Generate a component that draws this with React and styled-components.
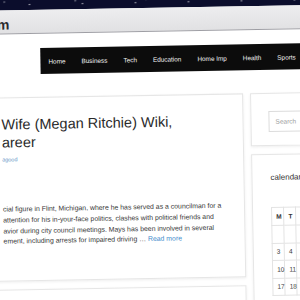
import styled, { createGlobalStyle } from 'styled-components'

const Global = createGlobalStyle`
  html, body {
    margin: 0;
    padding: 0;
    background: #fff;
    overflow: hidden;
  }
  body {
    width: 300px;
    height: 300px;
    font-family: "Liberation Sans", Arial, sans-serif;
  }
`

const Frame = styled.div`
  width: 400px;
  height: 360px;
  margin: -20px 0 0 -50px;
  background: #fff;
  transform: rotate(-1deg);
  transform-origin: 200px 170px;
  display: flex;
  flex-direction: column;
`

const Sky = styled.div`
  height: 28px;
  flex: none;
  background-color: #0b0d2c;
  background-image:
    radial-gradient(circle at 20% 60%, rgba(255,255,255,.7) 0 0.6px, transparent 1px),
    radial-gradient(circle at 55% 80%, rgba(255,255,255,.6) 0 0.6px, transparent 1px),
    radial-gradient(circle at 80% 70%, rgba(255,255,255,.5) 0 0.6px, transparent 1px);
  background-size: 37px 28px, 53px 28px, 71px 28px;
`

const Bar = styled.div`
  height: 24px;
  flex: none;
  background: linear-gradient(#ededef, #e1e1e3);
  border-bottom: 1px solid #9e9ea4;
  display: flex;
  align-items: center;
  padding: 4px 0 0 49px;
  box-sizing: border-box;
`

const SiteName = styled.span`
  font-size: 14px;
  font-weight: bold;
  color: #2b2b2f;
`

const Page = styled.div`
  flex: 1;
  display: flex;
  flex-direction: column;
  padding-top: 14px;
`

const Nav = styled.nav`
  margin-left: 92px;
  height: 26px;
  background: #0c0c0c;
  display: flex;
  align-items: center;
`

const NavItem = styled.span`
  color: #f2f2f2;
  font-size: 6.4px;
  padding: 0 8px;
  white-space: nowrap;
`

const Content = styled.div`
  display: grid;
  grid-template-columns: 294px 1fr;
  column-gap: 7px;
  margin-top: 23px;
`

const MainCol = styled.div`
  display: flex;
  flex-direction: column;
  gap: 8px;
`

const Card = styled.div`
  background: #fff;
  border: 1px solid #e6e6e6;
  box-shadow: 0 1px 3px rgba(0, 0, 0, 0.07);
  box-sizing: border-box;
  height: ${p => p.$h}px;
  padding: ${p => p.$pad};
`

const Title = styled.h2`
  margin: 0;
  font-size: 14.5px;
  line-height: 18px;
  font-weight: normal;
  color: #2a2a2a;
  white-space: nowrap;
`

const Author = styled.a`
  display: block;
  margin-top: 5px;
  font-size: 5.5px;
  color: #5b93c6;
`

const Body = styled.p`
  margin: 42px 0 0;
  font-size: 6.9px;
  line-height: 10.8px;
  color: #363636;
  white-space: nowrap;
`

const More = styled.a`
  color: #3f8ccc;
`

const Side = styled.div`
  display: flex;
  flex-direction: column;
  gap: 8px;
`

const SearchBox = styled.div`
  height: 19px;
  border: 1px solid #dcdcdc;
  background: #fff;
  display: flex;
  align-items: center;
  padding-left: 6px;
  font-size: 6.5px;
  color: #9a9a9a;
`

const WidgetTitle = styled.div`
  font-size: 8px;
  color: #333;
  line-height: 10px;
`

const Table = styled.table`
  margin-top: 24px;
  border-collapse: collapse;
  font-size: 6.5px;
  color: #333;
`

const Th = styled.th`
  width: 14.5px;
  height: 18px;
  border: 1px solid #e3e3e3;
  text-align: left;
  padding: 0 0 0 4px;
  box-sizing: border-box;
`

const Td = styled.td`
  width: 14.5px;
  height: 17.5px;
  border: 1px solid #e3e3e3;
  padding: 0 0 0 4px;
  box-sizing: border-box;
`

const nav = ['Home', 'Business', 'Tech', 'Education', 'Home Imp', 'Health', 'Sports']
const days = ['M', 'T', 'W', 'T', 'F', 'S', 'S']
const weeks = [
  ['', '', '', '', '', '1', '2'],
  ['3', '4', '5', '6', '7', '8', '9'],
  ['10', '11', '12', '13', '14', '15', '16'],
  ['17', '18', '19', '20', '21', '22', '23'],
]

export default function App() {
  return (
    <>
      <Global />
      <Frame>
        <Sky />
        <Bar>
          <SiteName>m</SiteName>
        </Bar>
        <Page>
          <Nav>
            {nav.map(n => <NavItem key={n}>{n}</NavItem>)}
          </Nav>
          <Content>
            <MainCol>
              <Card $h={184} $pad="17px 0 0 51px">
                <Title>Wife (Megan Ritchie) Wiki,<br />areer</Title>
                <Author>agood</Author>
                <Body>
                  cial figure in Flint, Michigan, where he has served as a councilman for a<br />
                  attention for his in-your-face politics, clashes with political friends and<br />
                  avior during city council meetings. Mays has been involved in several<br />
                  ement, including arrests for impaired driving … <More>Read more</More>
                </Body>
              </Card>
              <Card $h={80} $pad="0" />
            </MainCol>
            <Side>
              <Card $h={53} $pad="17px 0 0 17px">
                <SearchBox>Search</SearchBox>
              </Card>
              <Card $h={200} $pad="18px 0 0 18px">
                <WidgetTitle>calendar</WidgetTitle>
                <Table>
                  <thead>
                    <tr>{days.map((d, i) => <Th key={i}>{d}</Th>)}</tr>
                  </thead>
                  <tbody>
                    {weeks.map((w, i) => (
                      <tr key={i}>{w.map((d, j) => <Td key={j}>{d}</Td>)}</tr>
                    ))}
                  </tbody>
                </Table>
              </Card>
            </Side>
          </Content>
        </Page>
      </Frame>
    </>
  )
}
